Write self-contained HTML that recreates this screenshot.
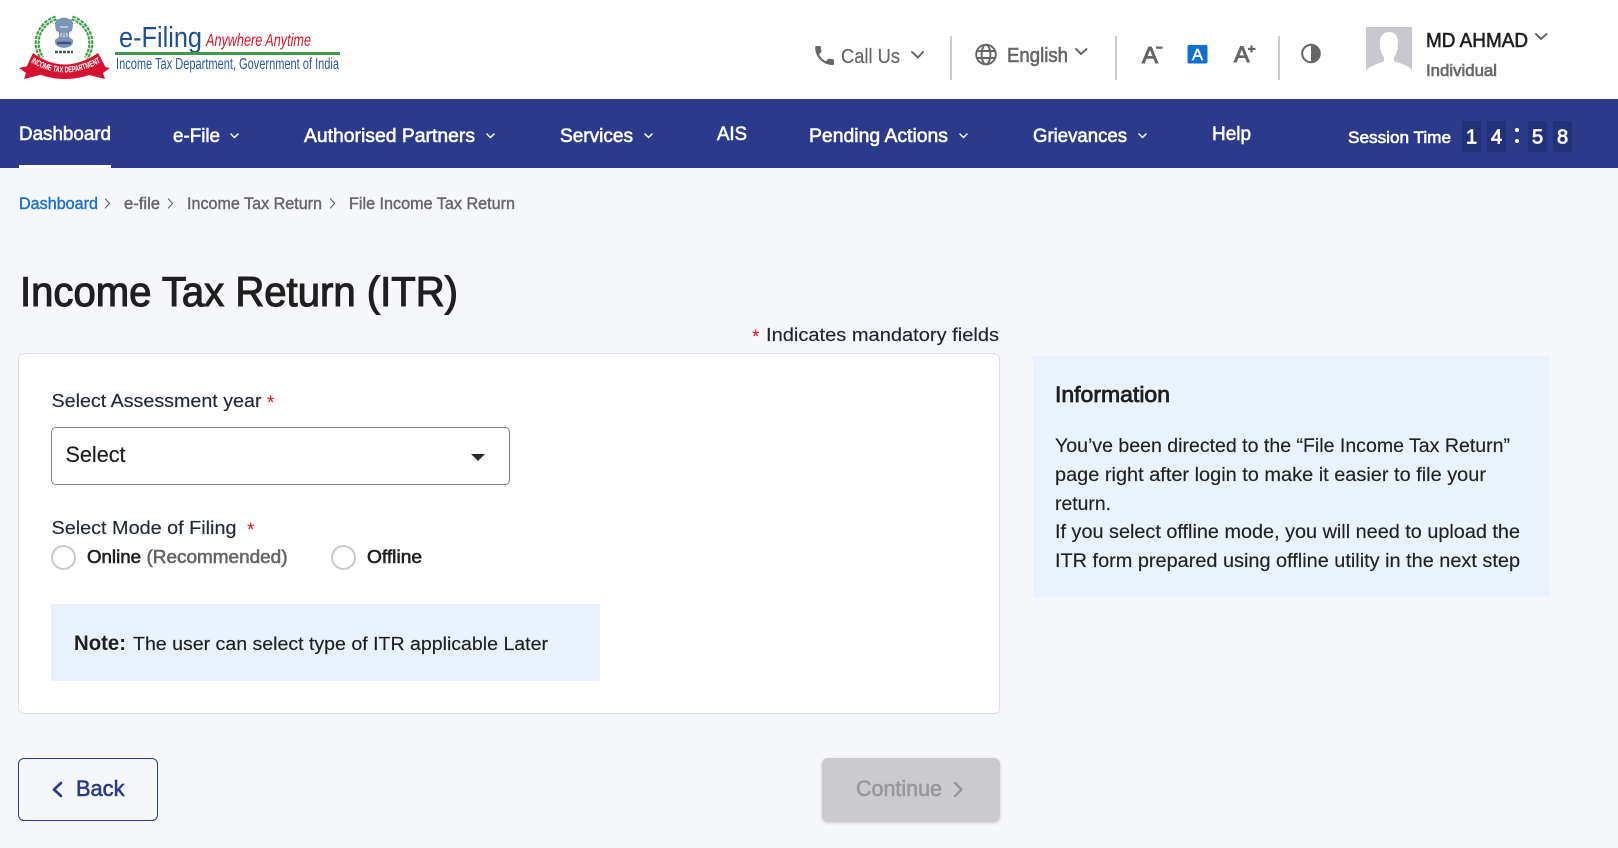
<!DOCTYPE html>
<html lang="en">
<head>
<meta charset="utf-8">
<title>Income Tax Return (ITR)</title>
<style>
html,body{margin:0;padding:0;width:1618px;height:848px;overflow:hidden;background:#f5f7fb}
body{position:relative;font-family:"Liberation Sans",Arial,sans-serif}
.b{position:absolute;box-sizing:border-box}
svg.o{position:absolute;left:0;top:0}
text{font-family:"Liberation Sans",Arial,sans-serif;fill:#222}
.m{stroke-width:.6px;paint-order:stroke}
.w{fill:#fff;stroke:#fff}
.g{fill:#666;stroke:#666}
.k{fill:#1f1f1f;stroke:#1f1f1f}
.c{fill:none;stroke-linecap:round;stroke-linejoin:round}
</style>
</head>
<body>
<div class="b" style="left:0;top:0;width:1618px;height:99px;background:#fff"></div>
<div class="b" style="left:0;top:99px;width:1618px;height:69px;background:#2b3a8a"></div>
<div class="b" style="left:19px;top:165px;width:92px;height:3px;background:#fff"></div>
<div class="b" style="left:950px;top:36px;width:2px;height:44px;background:#c7cccc"></div>
<div class="b" style="left:1115px;top:36px;width:2px;height:44px;background:#c7cccc"></div>
<div class="b" style="left:1278px;top:36px;width:2px;height:44px;background:#c7cccc"></div>
<div class="b" style="left:1462px;top:121px;width:19px;height:31px;background:#233278"></div>
<div class="b" style="left:1487px;top:121px;width:19px;height:31px;background:#233278"></div>
<div class="b" style="left:1528px;top:121px;width:19px;height:31px;background:#233278"></div>
<div class="b" style="left:1553px;top:121px;width:19px;height:31px;background:#233278"></div>
<div class="b" style="left:18px;top:353px;width:982px;height:361px;background:#fff;border:1px solid #dcdfea;border-radius:6px"></div>
<div class="b" style="left:51px;top:427px;width:459px;height:58px;background:#fff;border:1px solid #85878a;border-radius:5px"></div>
<div class="b" style="left:51px;top:545px;width:25px;height:25px;background:#fff;border:2px solid #c8c9ce;border-radius:50%"></div>
<div class="b" style="left:331px;top:545px;width:25px;height:25px;background:#fff;border:2px solid #c8c9ce;border-radius:50%"></div>
<div class="b" style="left:51px;top:604px;width:549px;height:77px;background:#e9f2fc"></div>
<div class="b" style="left:18px;top:758px;width:140px;height:63px;border:1.5px solid #2b3a8a;border-radius:6px"></div>
<div class="b" style="left:822px;top:758px;width:178px;height:64px;background:#cacacf;border-radius:6px;box-shadow:0 1px 3px rgba(0,0,0,.18)"></div>
<div class="b" style="left:1033px;top:356px;width:517px;height:241px;background:#eaf3fd"></div>

<svg class="o" width="1618" height="848" viewBox="0 0 1618 848" xmlns="http://www.w3.org/2000/svg">
<!-- logo -->
<g>
<g fill="none" stroke="#3f9a4b" stroke-width="5" stroke-dasharray="3.4 1">
<path d="M56 18 A26 26 0 0 0 42 58"/>
<path d="M72 18 A26 26 0 0 1 86 58"/>
</g>
<g fill="none" stroke="#d8ecd9" stroke-width="1">
<path d="M56 18 A26 26 0 0 0 42 58"/>
<path d="M72 18 A26 26 0 0 1 86 58"/>
</g>
<path d="M55 25 Q55 19 59 19 Q64 16 69 19 Q73 19 73 25 L72 31 L69 32 L69 37 L73 40 Q74 47 64 48 Q54 47 55 40 L59 37 L59 32 L56 31Z" fill="#7d94b6"/>
<path d="M60 27h8M61 33v4M64 33v4M67 33v4" stroke="#dfe6ef" stroke-width="1.200" fill="none"/>
<path d="M57 43h14" stroke="#35577f" stroke-width="2.500"/>
<path d="M55 52h18" stroke="#4c5a60" stroke-width="2.500" stroke-dasharray="3 1"/>
<path d="M28 66 L19 68 L26 73 L24 79 L40 75 Z" fill="#d3122e"/>
<path d="M100 66 L110 68 L103 73 L105 79 L89 75 Z" fill="#d3122e"/>
<path d="M30 69 L40 75 L36 66Z M99 69 L89 75 L93 66Z" fill="#1d4f8f"/>
<path d="M33 53 Q64 76 98 53 L106 68 Q64 90 26 68 Z" fill="#d7122e"/>
<path id="rb" d="M29 61 Q64 84 103 61" fill="none"/>
<text font-size="8.500" font-weight="700" style="fill:#fff"><textPath href="#rb" textLength="74" lengthAdjust="spacingAndGlyphs" startOffset="2">INCOME TAX DEPARTMENT</textPath></text>
</g>
<text x="119" y="47" font-size="28.500" textLength="83" lengthAdjust="spacingAndGlyphs" style="fill:#1d4f92">e-Filing</text>
<text x="206" y="46" font-size="17.500" font-style="italic" textLength="105" lengthAdjust="spacingAndGlyphs" style="fill:#d8122c">Anywhere Anytime</text>
<rect x="115" y="52" width="225" height="3" fill="#3c9a48"/>
<text x="116" y="69" font-size="15.500" textLength="223" lengthAdjust="spacingAndGlyphs" style="fill:#2a5a98">Income Tax Department, Government of India</text>

<!-- top bar -->
<path transform="translate(812 43) scale(1.05)" fill="#666" d="M6.62 10.79c1.44 2.83 3.76 5.14 6.59 6.59l2.2-2.2c.27-.27.67-.36 1.02-.24 1.12.37 2.33.57 3.57.57.55 0 1 .45 1 1V20c0 .55-.45 1-1 1-9.39 0-17-7.61-17-17 0-.55.45-1 1-1h3.5c.55 0 1 .45 1 1 0 1.25.2 2.45.57 3.57.11.35.03.74-.25 1.02l-2.2 2.2z"/>
<text x="841" y="63" font-size="20.500" textLength="59" lengthAdjust="spacingAndGlyphs" style="fill:#666;stroke:#666;stroke-width:.2px">Call Us</text>
<polyline class="c" points="912,52 918,57.500 923,52" stroke="#666" stroke-width="2"/>
<g fill="none" stroke="#666" stroke-width="1.900">
<circle cx="986" cy="54.500" r="9.800"/>
<ellipse cx="986" cy="54.500" rx="4.400" ry="9.800"/>
<path d="M976.600 51h18.800M976.600 58h18.800"/>
</g>
<text class="m g" x="1007" y="62" font-size="20.500" textLength="61" lengthAdjust="spacingAndGlyphs">English</text>
<polyline class="c" points="1076,49 1081,54 1086.500,49" stroke="#666" stroke-width="2"/>
<text x="1142" y="63" font-size="23" textLength="16" lengthAdjust="spacingAndGlyphs" style="fill:#666;stroke:#666;stroke-width:1px">A</text>
<rect x="1156" y="46.500" width="6.500" height="2.300" fill="#666"/>
<rect x="1187.500" y="45" width="20" height="18.500" rx="1.500" fill="#0f6fd3"/>
<text x="1192" y="60" font-size="15.500" textLength="11" lengthAdjust="spacingAndGlyphs" style="fill:#fff;stroke:#fff;stroke-width:.5px">A</text>
<text x="1234" y="62" font-size="22" textLength="15.500" lengthAdjust="spacingAndGlyphs" style="fill:#666;stroke:#666;stroke-width:1px">A</text>
<path d="M1251.500 45.500v7M1248 49h7.500" stroke="#666" stroke-width="2.200"/>
<circle cx="1311" cy="53.500" r="8.800" fill="#fff" stroke="#666" stroke-width="2"/>
<path d="M1311 44.700a8.800 8.800 0 0 1 0 17.600z" fill="#666"/>
<rect x="1366" y="27" width="46" height="48" fill="#c8c9ce"/>
<path d="M1389 32c5 0 9 3.500 9 10 0 2-.2 3.500-.7 5 .6 .4 .7 2-.3 3.500-1 4-2 5.500-3 7v3.500c2 1.500 13 3 18 9v5h-46v-4.500c4-5 16-8 18-9.500v-3.500c-1.200-1.500-2.200-3-3.200-7-1-1.500-.9-3.100-.3-3.500-.5-1.500-.7-3-.7-5 0-6.500 4-10 9-10z" fill="#fff"/>
<text class="m k" x="1426" y="47" font-size="20.500" textLength="102" lengthAdjust="spacingAndGlyphs">MD AHMAD</text>
<polyline class="c" points="1536,34 1541,39 1546.500,34" stroke="#666" stroke-width="2"/>
<text class="m g" x="1426" y="76" font-size="16.500" textLength="71" lengthAdjust="spacingAndGlyphs">Individual</text>

<!-- nav -->
<text class="m w" x="19" y="140" font-size="19.500" textLength="92" lengthAdjust="spacingAndGlyphs">Dashboard</text>
<text class="m w" x="173" y="142" font-size="19.500" textLength="47" lengthAdjust="spacingAndGlyphs">e-File</text>
<polyline class="c" points="231,134 234.500,137.500 238,134" stroke="#fff" stroke-width="1.500"/>
<text class="m w" x="304" y="142" font-size="19.500" textLength="171" lengthAdjust="spacingAndGlyphs">Authorised Partners</text>
<polyline class="c" points="487,134 490.500,137.500 494,134" stroke="#fff" stroke-width="1.500"/>
<text class="m w" x="560" y="142" font-size="19.500" textLength="73" lengthAdjust="spacingAndGlyphs">Services</text>
<polyline class="c" points="645,134 648.500,137.500 652,134" stroke="#fff" stroke-width="1.500"/>
<text class="m w" x="717" y="140" font-size="19.500" textLength="30" lengthAdjust="spacingAndGlyphs">AIS</text>
<text class="m w" x="809" y="142" font-size="19.500" textLength="139" lengthAdjust="spacingAndGlyphs">Pending Actions</text>
<polyline class="c" points="960,134 963.500,137.500 967,134" stroke="#fff" stroke-width="1.500"/>
<text class="m w" x="1033" y="142" font-size="19.500" textLength="94" lengthAdjust="spacingAndGlyphs">Grievances</text>
<polyline class="c" points="1139,134 1142.500,137.500 1146,134" stroke="#fff" stroke-width="1.500"/>
<text class="m w" x="1212" y="140" font-size="19.500" textLength="39" lengthAdjust="spacingAndGlyphs">Help</text>
<text class="m w" x="1348" y="143" font-size="16.500" textLength="103" lengthAdjust="spacingAndGlyphs">Session Time</text>
<g font-size="20" text-anchor="middle" style="stroke-width:.8px">
<text class="w" x="1471.500" y="143.500" text-anchor="middle" style="stroke-width:.8px">1</text>
<text class="w" x="1496.500" y="143.500" text-anchor="middle" style="stroke-width:.8px">4</text>
<text class="w" x="1537.500" y="143.500" text-anchor="middle" style="stroke-width:.8px">5</text>
<text class="w" x="1562.500" y="143.500" text-anchor="middle" style="stroke-width:.8px">8</text>
</g>
<circle cx="1517" cy="130" r="2" fill="#fff"/><circle cx="1517" cy="141" r="2" fill="#fff"/>

<!-- breadcrumb -->
<text class="m" x="19" y="209" font-size="16.500" textLength="79" lengthAdjust="spacingAndGlyphs" style="fill:#1a72c7;stroke:#1a72c7;stroke-width:.4px">Dashboard</text>
<polyline class="c" points="105.500,199 109.500,203.500 105.500,208" stroke="#666" stroke-width="1.200"/>
<text class="m g" x="124" y="209" font-size="16.500" textLength="36" lengthAdjust="spacingAndGlyphs" style="stroke-width:.4px">e-file</text>
<polyline class="c" points="168.500,199 172.500,203.500 168.500,208" stroke="#666" stroke-width="1.200"/>
<text class="m g" x="187" y="209" font-size="16.500" textLength="135" lengthAdjust="spacingAndGlyphs" style="stroke-width:.4px">Income Tax Return</text>
<polyline class="c" points="330.500,199 334.500,203.500 330.500,208" stroke="#666" stroke-width="1.200"/>
<text class="m g" x="349" y="209" font-size="16.500" textLength="166" lengthAdjust="spacingAndGlyphs" style="stroke-width:.4px">File Income Tax Return</text>

<!-- title -->
<text class="m k" x="20" y="306" font-size="41.500" textLength="438" lengthAdjust="spacingAndGlyphs" style="stroke-width:1.100px">Income Tax Return (ITR)</text>
<text x="752" y="343" font-size="19" style="fill:#e0101e">*</text>
<text x="766" y="341" font-size="18.500" textLength="233" lengthAdjust="spacingAndGlyphs" style="fill:#1f2430;stroke:#1f2430;stroke-width:.15px">Indicates mandatory fields</text>

<!-- form -->
<text x="51.500" y="407" font-size="18.500" textLength="210" lengthAdjust="spacingAndGlyphs" style="fill:#222a35;stroke:#222a35;stroke-width:.15px">Select Assessment year</text>
<text x="267" y="409" font-size="19" style="fill:#e0101e">*</text>
<text x="65.500" y="462" font-size="22" textLength="60" lengthAdjust="spacingAndGlyphs" style="fill:#1c1c1c;stroke:#1c1c1c;stroke-width:.15px">Select</text>
<path d="M471 454h14l-7 7z" fill="#2b2b2b"/>
<text x="51.500" y="534" font-size="18.500" textLength="185" lengthAdjust="spacingAndGlyphs" style="fill:#222a35;stroke:#222a35;stroke-width:.15px">Select Mode of Filing</text>
<text x="247" y="536" font-size="19" style="fill:#e0101e">*</text>
<text class="m k" x="87" y="563" font-size="18.500" textLength="54" lengthAdjust="spacingAndGlyphs">Online</text>
<text class="m g" x="146.500" y="563" font-size="18.500" textLength="141" lengthAdjust="spacingAndGlyphs">(Recommended)</text>
<text class="m k" x="367" y="563" font-size="18.500" textLength="55" lengthAdjust="spacingAndGlyphs">Offline</text>
<text class="k" x="74" y="650" font-size="21" font-weight="700" textLength="52" lengthAdjust="spacingAndGlyphs" style="stroke:none">Note:</text>
<text x="133" y="650" font-size="18.500" textLength="415" lengthAdjust="spacingAndGlyphs" style="fill:#1f1f1f;stroke:#1f1f1f;stroke-width:.15px">The user can select type of ITR applicable Later</text>

<!-- buttons -->
<polyline class="c" points="61,783 54,789.500 61,796" stroke="#2b3a8a" stroke-width="2.600"/>
<text class="m" x="76" y="796" font-size="22.500" textLength="48.500" lengthAdjust="spacingAndGlyphs" style="fill:#2b3a8a;stroke:#2b3a8a">Back</text>
<text class="m" x="856" y="796" font-size="22.500" textLength="86" lengthAdjust="spacingAndGlyphs" style="fill:#97979c;stroke:#97979c">Continue</text>
<polyline class="c" points="955,783 961.500,789.500 955,796" stroke="#97979c" stroke-width="2.400"/>

<!-- information -->
<text class="m k" x="1055" y="402" font-size="22.500" textLength="115" lengthAdjust="spacingAndGlyphs" style="stroke-width:.8px">Information</text>
<g font-size="19" style="stroke:#222;stroke-width:.15px">
<text x="1055" y="452" textLength="455" lengthAdjust="spacingAndGlyphs">You’ve been directed to the “File Income Tax Return”</text>
<text x="1055" y="481" textLength="431" lengthAdjust="spacingAndGlyphs">page right after login to make it easier to file your</text>
<text x="1055" y="510" textLength="56" lengthAdjust="spacingAndGlyphs">return.</text>
<text x="1055" y="538" textLength="465" lengthAdjust="spacingAndGlyphs">If you select offline mode, you will need to upload the</text>
<text x="1055" y="567" textLength="465" lengthAdjust="spacingAndGlyphs">ITR form prepared using offline utility in the next step</text>
</g>
</svg>
</body>
</html>
